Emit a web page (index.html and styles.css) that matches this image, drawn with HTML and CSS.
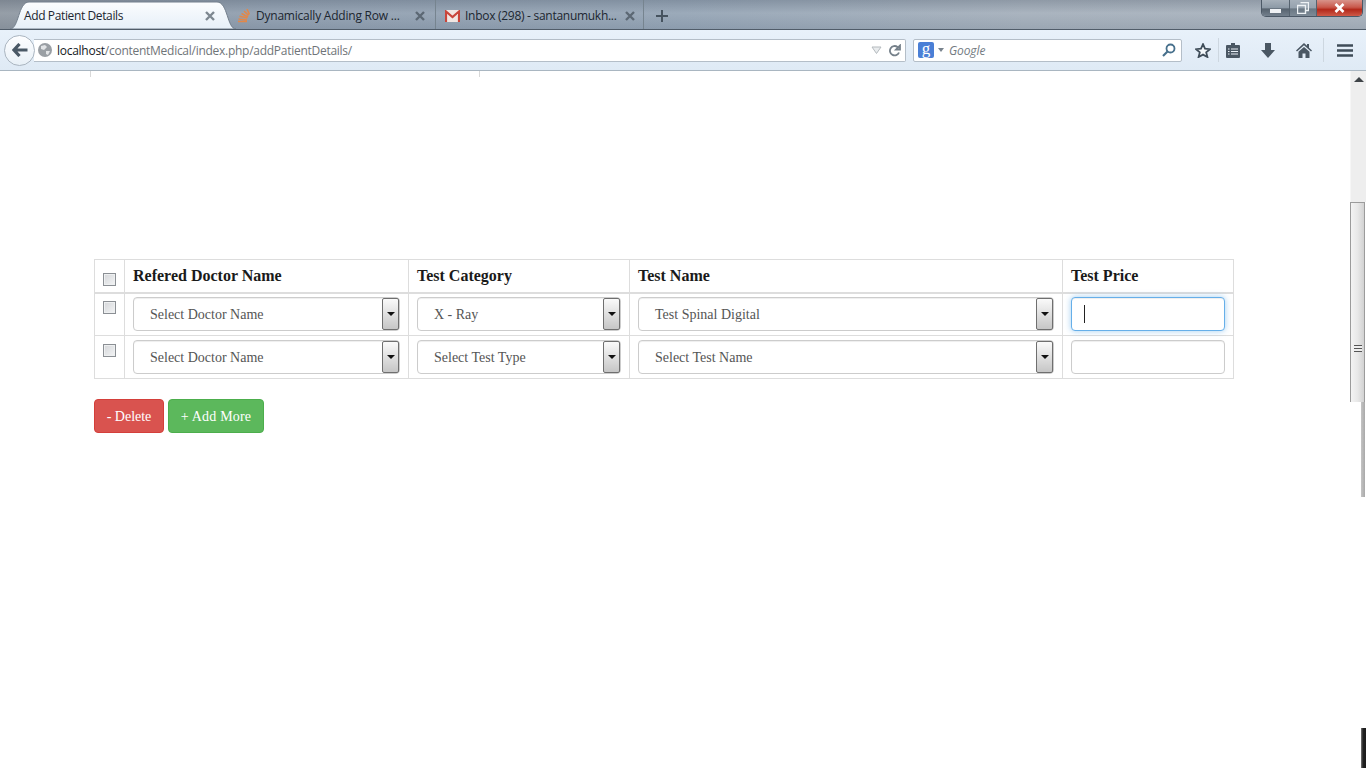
FILE: index.html
```html
<!DOCTYPE html>
<html lang="en">
<head>
<meta charset="utf-8">
<title>Add Patient Details</title>
<link rel="stylesheet" href="styles.css">
</head>
<body>
<div class="window">
  <header class="tabbar">
    <div class="tab tab-active">
      <svg class="tab-shape" width="226" height="28" viewBox="0 0 226 28"><defs><linearGradient id="tg" x1="0" y1="0" x2="0" y2="1"><stop offset="0" stop-color="#fbfdfe"/><stop offset="1" stop-color="#e6eff8"/></linearGradient></defs><path d="M0 28C9 28 8 1 19 1H207C218 1 217 28 226 28Z" fill="url(#tg)" stroke="#737f8c" stroke-width="1"/></svg>
      <span class="tab-title">Add Patient Details</span>
      <svg class="tab-x" width="10" height="10" viewBox="0 0 10 10"><path d="M1 1L9 9M9 1L1 9" stroke="#7d8790" stroke-width="2.4"/></svg>
    </div>
    <div class="tab tab-so">
      <svg class="favicon" width="14" height="16" viewBox="0 0 14 16"><path d="M2 13.500H11M2.500 11L11 12M3.500 8.200L11.500 10M5.500 5.500L12 9M8 3L12.600 7.400M11 1L13.400 6.500" stroke="#e2884a" stroke-width="1.600" fill="none"/></svg>
      <span class="tab-title">Dynamically Adding Row ...</span>
      <svg class="tab-x" width="10" height="10" viewBox="0 0 10 10"><path d="M1 1L9 9M9 1L1 9" stroke="#5c6874" stroke-width="2.4"/></svg>
    </div>
    <div class="tab tab-gm">
      <svg class="favicon" width="15" height="12" viewBox="0 0 15 12"><rect width="15" height="12" fill="#f1e6e2"/><path d="M1 12V1.500L7.500 7L14 1.500V12" fill="none" stroke="#c9453a" stroke-width="2.200"/></svg>
      <span class="tab-title">Inbox (298) - santanumukh...</span>
      <svg class="tab-x" width="10" height="10" viewBox="0 0 10 10"><path d="M1 1L9 9M9 1L1 9" stroke="#5c6874" stroke-width="2.4"/></svg>
    </div>
    <svg class="tab-new" width="12" height="12" viewBox="0 0 12 12"><path d="M6 0V12M0 6H12" stroke="#46535f" stroke-width="2"/></svg>
    <div class="win-controls">
      <div class="win-btn win-min"><span class="min-bar"></span></div>
      <div class="win-btn win-max"><svg width="12" height="12" viewBox="0 0 12 12"><path d="M3.500 .5H11.500V8.500H9M.5 3.500H8.500V11.500H.5Z" fill="none" stroke="#eef2f5" stroke-width="1.400"/></svg></div>
      <div class="win-btn win-close"><svg width="11" height="10" viewBox="0 0 11 10"><path d="M1.500 1L9.500 9M9.500 1L1.500 9" stroke="#fff" stroke-width="2.600"/></svg></div>
    </div>
  </header>

  <nav class="toolbar">
    <div class="back"><svg width="16" height="14" viewBox="0 0 16 14"><path d="M7.500 1L2 7L7.500 13M2.500 7H15.500" fill="none" stroke="#4a5966" stroke-width="3.200"/></svg></div>
    <div class="urlbar">
      <svg class="globe" width="14" height="14" viewBox="0 0 14 14"><circle cx="7" cy="7" r="7" fill="#9a9fa4"/><path d="M3 3L7 2L9 4L6 7L3 6ZM8 8L12 8L10 12L8 11Z" fill="#e2e4e6"/></svg>
      <span class="url"><span class="url-host">localhost</span>/contentMedical/index.php/addPatientDetails/</span>
      <svg class="url-drop" width="11" height="8" viewBox="0 0 11 8"><path d="M1 1H10L5.500 7.500Z" fill="#e9ecee" stroke="#b5babe"/></svg>
      <svg class="url-reload" width="13" height="13" viewBox="0 0 13 13"><path d="M11 8.500A4.700 4.700 0 1 1 9.500 3M8 5.500H12V1.500Z" fill="none" stroke="#75808a" stroke-width="1.800"/></svg>
    </div>
    <div class="searchbar">
      <span class="g-icon">g</span>
      <svg class="g-drop" width="6" height="4" viewBox="0 0 6 4"><path d="M0 0H6L3 4Z" fill="#78838d"/></svg>
      <span class="search-label">Google</span>
      <svg class="search-glass" width="14" height="14" viewBox="0 0 14 14"><circle cx="8.500" cy="5.500" r="4" fill="none" stroke="#47708c" stroke-width="1.800"/><path d="M5.500 8.500L1 13" stroke="#47708c" stroke-width="2.200"/></svg>
    </div>
    <div class="tools">
      <svg width="16" height="15" viewBox="0 0 16 15"><path d="M8 1.200L10 5.700L15 6.200L11.200 9.400L12.400 14L8 11.600L3.600 14L4.800 9.400L1 6.200L6 5.700Z" fill="#f4f8fb" stroke="#3f4d59" stroke-width="1.800"/></svg>
      <span class="tool-sep"></span>
      <svg class="tool-book" width="14" height="15" viewBox="0 0 14 15"><path d="M0 3Q0 2 1 2H5V0H9V2H13Q14 2 14 3V14Q14 15 13 15H1Q0 15 0 14Z" fill="#4a5763"/><path d="M5 6H12M5 8.500H12M5 11H12M2 6H3.500M2 8.500H3.500M2 11H3.500" stroke="#e8eff6"/></svg>
      <svg class="tool-down" width="14" height="15" viewBox="0 0 14 15"><path d="M4 0H10V7H14L7 15L0 7H4Z" fill="#4a5763"/></svg>
      <svg class="tool-home" width="16" height="15" viewBox="0 0 16 15"><path d="M8 0L11 2.800V1H13V4.700L16 7.500L15 8.500L8 2.300L1 8.500L0 7.500ZM8 4L13.500 8.800V15H9.500V10.500H6.500V15H2.500V8.800Z" fill="#4a5763"/></svg>
      <span class="tool-sep tool-sep-2"></span>
      <svg class="tool-menu" width="16" height="13" viewBox="0 0 16 13"><path d="M0 1.500H16M0 6.500H16M0 11.500H16" stroke="#3f4c58" stroke-width="2.400"/></svg>
    </div>
  </nav>

  <div class="viewport">
    <main class="page">
      <div class="prev-field"></div>
      <table class="rows">
        <thead>
          <tr>
            <th class="col-check"><input class="check" type="checkbox"></th>
            <th class="col-doctor">Refered Doctor Name</th>
            <th class="col-cat">Test Category</th>
            <th class="col-test">Test Name</th>
            <th class="col-price">Test Price</th>
          </tr>
        </thead>
        <tbody>
          <tr>
            <td><input class="check" type="checkbox"></td>
            <td><div class="select">Select Doctor Name<span class="arrow"></span></div></td>
            <td><div class="select">X - Ray<span class="arrow"></span></div></td>
            <td><div class="select">Test Spinal Digital<span class="arrow"></span></div></td>
            <td><div class="field field-focus"><span class="caret"></span></div></td>
          </tr>
          <tr>
            <td><input class="check" type="checkbox"></td>
            <td><div class="select">Select Doctor Name<span class="arrow"></span></div></td>
            <td><div class="select">Select Test Type<span class="arrow"></span></div></td>
            <td><div class="select">Select Test Name<span class="arrow"></span></div></td>
            <td><div class="field"></div></td>
          </tr>
        </tbody>
      </table>
      <div class="actions">
        <button class="btn btn-delete" type="button">- Delete</button>
        <button class="btn btn-add" type="button">+ Add More</button>
      </div>
    </main>
    <aside class="scrollbar">
      <div class="sb-track"><span class="sb-up"></span></div>
      <div class="sb-thumb"><span class="sb-grip"></span></div>
      <div class="sb-sliver"></div>
      <div class="sb-blank"></div>
      <div class="sb-dark"></div>
    </aside>
  </div>
</div>
</body>
</html>
```
FILE: styles.css
```css
* { box-sizing: border-box; }
html, body { margin: 0; height: 100%; overflow: hidden; }
body { background: #fff; font-family: "Liberation Serif", serif; }
.window { width: 1366px; height: 768px; display: flex; flex-direction: column; }

.tabbar {
  height: 30px; flex: none; display: flex; align-items: stretch; position: relative;
  padding-left: 14px;
  font: 12px "Open Sans", sans-serif; color: #1c2630;
  background:
    linear-gradient(rgba(70,80,95,.22), rgba(255,255,255,.08) 45%, rgba(60,75,95,.08)),
    linear-gradient(90deg, #8d96a0 0%, #8e9dae 20%, #93a3b4 50%, #a3aeba 75%, #a6b0bb 100%);
  border-bottom: 1px solid #505c69;
}
.tab { display: flex; align-items: center; position: relative; height: 29px; padding-top: 2px; }
.tab-active { width: 216px; padding-left: 10px; }
.tab-shape { position: absolute; left: -4px; top: 1px; }
.tab-title { position: relative; white-space: nowrap; }
.tab-active .tab-title { letter-spacing: -.38px; }
.tab-so .tab-title { letter-spacing: -.22px; }
.tab-gm .tab-title { letter-spacing: -.28px; }
.tab-x { position: absolute; top: 11px; }
.tab-active .tab-x { left: 191px; }
.tab-so { width: 206px; padding-left: 6px; border-right: 1px solid #76848f; }
.tab-so .tab-x { left: 185px; }
.tab-so .favicon { margin-right: 6px; }
.tab-gm { width: 208px; padding-left: 9px; border-right: 1px solid #76848f; }
.tab-gm .tab-x { left: 189px; }
.tab-gm .favicon { margin-right: 5px; }
.tab-new { margin: 10px 0 0 12px; }
.win-controls {
  position: absolute; right: 3px; top: 0; width: 102px; height: 17px; display: flex;
  border: 1px solid #4b5866; border-top: 0; border-radius: 0 0 5px 5px; overflow: hidden;
}
.win-btn { display: flex; align-items: center; justify-content: center; border-right: 1px solid #56636f; }
.win-min { width: 28px; background: linear-gradient(#a6b0ba 0%, #8c99a6 50%, #56626e 55%, #727f8c 100%); }
.win-max { width: 27px; background: linear-gradient(#a6b0ba 0%, #96a2ae 50%, #6a7783 55%, #7d8a96 100%); }
.win-close { flex: 1; border: 0; background: linear-gradient(#d8938a 0%, #c9594c 45%, #b3291b 60%, #cf5a48 100%); }
.min-bar { width: 11px; height: 4px; background: #eef1f4; margin-top: 5px; }

.toolbar {
  height: 41px; flex: none; display: flex; align-items: center; padding: 0 0 0 4px;
  background: linear-gradient(#e8f1fa, #dfeaf5);
  border-bottom: 1px solid #a9b6c1;
  position: relative;
}
.back {
  width: 31px; height: 31px; border-radius: 50%; flex: none; margin-right: -1px; position: relative; z-index: 1;
  display: flex; align-items: center; justify-content: center;
  background: linear-gradient(#fdfeff, #e8f0f7); border: 1px solid #aab5c0;
}
.urlbar {
  width: 872px; height: 23px; flex: none; background: #fff;
  border: 1px solid #b4bec8; border-left: 0; border-radius: 0 2px 2px 0;
  display: flex; align-items: center; padding-left: 4px;
  font: 12px "Open Sans", sans-serif; color: #6f7478;
}
.globe { flex: none; margin-right: 5px; }
.url { white-space: nowrap; letter-spacing: -.27px; flex: 1; }
.url-host { color: #14191d; }
.url-drop { margin-right: 6px; }
.url-reload { margin-right: 4px; }
.searchbar {
  width: 269px; height: 23px; flex: none; margin-left: 7px; background: #fff;
  border: 1px solid #b4bec8; border-radius: 2px; display: flex; align-items: center; padding-left: 4px;
}
.g-icon {
  width: 16px; height: 16px; background: #4a7fd6; border-radius: 2px; color: #fff; text-align: center;
  font: 17px/13px "Liberation Serif", serif;
}
.g-drop { margin: 0 0 0 4px; }
.search-label { font: italic 12px "Open Sans", sans-serif; color: #737b82; margin-left: 5px; flex: 1; letter-spacing: -.1px; }
.search-glass { margin-right: 5px; }
.tools { display: flex; align-items: center; height: 40px; margin-left: 13px; }
.tool-sep { width: 1px; height: 24px; background: #cdd7e0; margin-left: 7px; }
.tool-book { margin-left: 7px; }
.tool-down { margin-left: 21px; }
.tool-home { margin-left: 21px; }
.tool-sep-2 { margin-left: 11px; }
.tool-menu { margin-left: 13px; }

.viewport { flex: 1; display: flex; min-height: 0; }
.page { flex: 1; padding-left: 94px; }
.prev-field {
  width: 390px; height: 6px; margin-left: -4px; margin-bottom: 182px;
  border: 1px solid #d8d8d8; border-width: 0 1px;
}
.rows { border-collapse: collapse; width: 1140px; table-layout: fixed; font-size: 14px; color: #555; }
.rows th, .rows td { border: 1px solid #ddd; padding: 0 8px; vertical-align: middle; }
.rows th { height: 33px; padding-top: 1px; border-bottom-width: 2px; font-size: 16px; color: #1a1a1a; text-align: left; }
.rows td { height: 43px; }
.rows td:first-child { vertical-align: top; padding-top: 8px; }
.rows tbody tr:first-child td:first-child { padding-top: 7px; }
.col-check { width: 30px; }
.col-doctor { width: 284px; }
.col-cat { width: 221px; }
.col-test { width: 433px; }
.check {
  appearance: none; display: block; width: 13px; height: 13px; margin: 0;
  border: 1px solid #8b8f94; background: linear-gradient(135deg, #d4d6d9, #f3f4f5); box-shadow: inset 0 0 0 1px #eef0f1;
}
th .check { margin-top: 7px; }
.select {
  height: 34px; position: relative; border: 1px solid #ccc; border-radius: 4px; background: #fff;
  padding-left: 16px; line-height: 34px; box-shadow: inset 0 1px 1px rgba(0,0,0,.07);
}
.arrow {
  position: absolute; right: 0; top: 0; width: 17px; height: 32px;
  background: linear-gradient(#fafafa, #c6c6c6); border: 1px solid #6f6f6f; border-radius: 2px;
}
.arrow::after {
  content: ""; position: absolute; left: 4px; top: 13px;
  border: 4px solid transparent; border-top-color: #111; border-bottom: 0;
}
.field {
  height: 34px; position: relative; border: 1px solid #ccc; border-radius: 4px; background: #fff;
  box-shadow: inset 0 1px 1px rgba(0,0,0,.07);
}
.field-focus { border-color: #66afe9; box-shadow: inset 0 1px 1px rgba(0,0,0,.07), 0 0 6px rgba(102,175,233,.6); }
.caret { position: absolute; left: 12px; top: 7px; width: 1px; height: 18px; background: #222; }
.actions { display: flex; gap: 4px; margin-top: 20px; }
.btn {
  height: 34px; border: 1px solid; border-radius: 4px; color: #fff;
  font: 14px "Liberation Serif", serif;
}
.btn-delete { width: 70px; padding: 2px 0 0; background: #d9534f; border-color: #d43f3a; }
.btn-add { width: 96px; padding: 2px 0 0; letter-spacing: .2px; background: #5cb85c; border-color: #4cae4c; }

.scrollbar { width: 16px; flex: none; display: flex; flex-direction: column; }
.sb-track { height: 131px; flex: none; background: #eeeeee; position: relative; border-left: 1px solid #f6f6f6; }
.sb-up {
  position: absolute; left: 3px; top: 6px;
  border: 5px solid transparent; border-bottom-color: #3f4448; border-top: 0;
}
.sb-thumb {
  height: 200px; flex: none; position: relative; margin-right: 1px;
  border: 1px solid #9b9b9b; border-width: 1px 1px 0;
  background: linear-gradient(90deg, #f3f3f3, #e8e8e8 50%, #d2d2d2);
}
.sb-grip {
  position: absolute; left: 3px; top: 142px; width: 8px; height: 7px;
  background: repeating-linear-gradient(#555 0 1px, #eee 1px 3px);
}
.sb-sliver {
  height: 95px; flex: none; margin-left: 11px; margin-right: 1px;
  background: linear-gradient(90deg, #c4c4c4, #a9a9a9);
}
.sb-blank { flex: 1; background: #fff; }
.sb-dark { height: 40px; flex: none; margin-left: 11px; background: linear-gradient(90deg, #777, #222 40%, #1a1a1a); }
```
